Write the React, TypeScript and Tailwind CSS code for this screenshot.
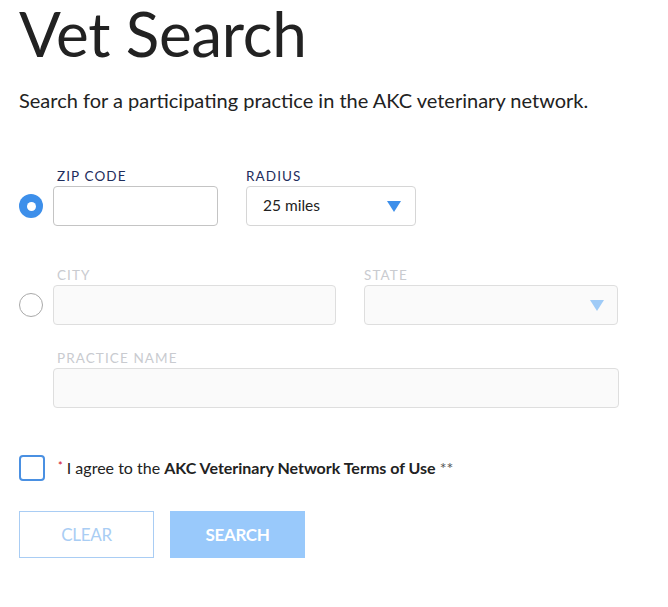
import React from "react";

const font = { fontFamily: "Lato, 'Open Sans', sans-serif" };

function Caret({ light }: { light?: boolean }) {
  return (
    <svg width="14" height="11" viewBox="0 0 14 11" className="shrink-0">
      <path d="M0 0 H14 L7 11 Z" fill={light ? "#9fcbf7" : "#3d8fea"} />
    </svg>
  );
}

export default function App() {
  return (
    <div className="min-h-[607px] w-[668px] bg-white text-[#222]" style={font}>
      <div className="pl-[19px]">
        <h1 className="text-[62px] leading-[66px] font-normal text-[#222] tracking-[-0.3px]">
          Vet Search
        </h1>
        <p className="mt-[21px] text-[20px] leading-[26px] text-[#222]">
          Search for a participating practice in the AKC veterinary network.
        </p>

        {/* zip + radius */}
        <div className="mt-[54px] flex items-end">
          <div className="w-[34px] h-[40px] flex items-center">
            <div className="w-[24px] h-[24px] rounded-full bg-[#3d8fea] flex items-center justify-center">
              <div className="w-[9px] h-[9px] rounded-full bg-white" />
            </div>
          </div>
          <div className="flex flex-col">
            <label className="pl-[4px] text-[13.5px] leading-[18px] tracking-[1.1px] text-[#1e2d5c] mb-[1px]">
              ZIP CODE
            </label>
            <div className="w-[165px] h-[40px] border border-[#c4c4c4] rounded-[4px]" />
          </div>
          <div className="flex flex-col ml-[28px]">
            <label className="text-[13.5px] leading-[18px] tracking-[1.1px] text-[#1e2d5c] mb-[1px]">
              RADIUS
            </label>
            <div className="w-[170px] h-[40px] border border-[#d6d6d6] rounded-[4px] flex items-center justify-between pl-[16px] pr-[14px]">
              <span className="text-[15.5px] text-[#222]">25 miles</span>
              <Caret />
            </div>
          </div>
        </div>

        {/* city + state */}
        <div className="mt-[40px] flex items-end">
          <div className="w-[34px] h-[40px] flex items-center">
            <div className="w-[24px] h-[24px] rounded-full border border-[#a9a9a9] bg-white" />
          </div>
          <div className="flex flex-col">
            <label className="pl-[4px] text-[13.5px] leading-[18px] tracking-[1.1px] text-[#c9cbd0] mb-[1px]">
              CITY
            </label>
            <div className="w-[283px] h-[40px] border border-[#dedede] bg-[#fafafa] rounded-[4px]" />
          </div>
          <div className="flex flex-col ml-[28px]">
            <label className="text-[13.5px] leading-[18px] tracking-[1.1px] text-[#c9cbd0] mb-[1px]">
              STATE
            </label>
            <div className="w-[254px] h-[40px] border border-[#dedede] bg-[#fafafa] rounded-[4px] flex items-center justify-end pr-[13px]">
              <Caret light />
            </div>
          </div>
        </div>

        {/* practice name */}
        <div className="mt-[24px] ml-[34px] flex flex-col">
          <label className="pl-[4px] text-[13.5px] leading-[18px] tracking-[1.1px] text-[#c9cbd0] mb-[1px]">
            PRACTICE NAME
          </label>
          <div className="w-[566px] h-[40px] border border-[#dedede] bg-[#fafafa] rounded-[4px]" />
        </div>

        {/* terms */}
        <div className="mt-[47px] flex items-center">
          <div className="w-[26px] h-[26px] border-2 border-[#4a90e2] rounded-[4px]" />
          <p className="ml-[13px] text-[16px] text-[#222]">
            <span className="text-[#d0021b] text-[11px] align-top relative top-[2px]">*</span>{" "}
            I agree to the <strong className="font-bold">AKC Veterinary Network Terms of Use</strong>{" "}
            <span className="text-[#555]">**</span>
          </p>
        </div>

        {/* buttons */}
        <div className="mt-[30px] flex gap-[16px]">
          <button className="w-[135px] h-[47px] border border-[#a9cdf4] bg-white text-[#a9cdf4] text-[17px] tracking-[-0.3px]">
            CLEAR
          </button>
          <button className="w-[135px] h-[47px] bg-[#99c9fb] text-white text-[17px] font-bold tracking-[-0.3px]">
            SEARCH
          </button>
        </div>
      </div>
    </div>
  );
}
